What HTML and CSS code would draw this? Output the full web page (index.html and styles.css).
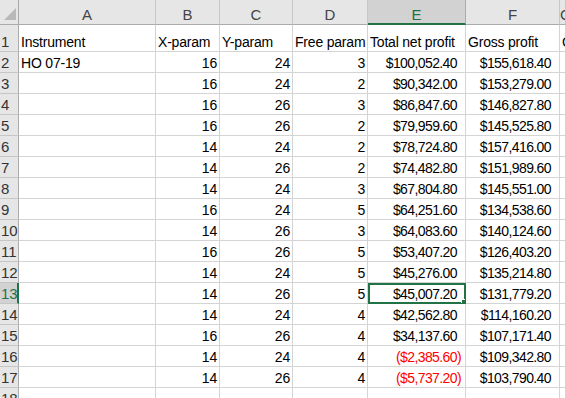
FILE: index.html
```html
<!DOCTYPE html>
<html lang="en">
<head>
  <meta charset="UTF-8" />
  <meta name="viewport" content="width=device-width, initial-scale=1.0" />
  <title>Optimization results</title>
  <link rel="stylesheet" href="styles.css">
</head>
<body>
  <div class="sheet">
    <div class="corner"><span class="corner-mark"></span></div>
    <div class="col-head">A</div>
    <div class="col-head">B</div>
    <div class="col-head">C</div>
    <div class="col-head">D</div>
    <div class="col-head active">E</div>
    <div class="col-head">F</div>
    <div class="col-head">G</div>

    <div class="row-head">1</div>
    <div class="cell">Instrument</div>
    <div class="cell">X-param</div>
    <div class="cell">Y-param</div>
    <div class="cell">Free param</div>
    <div class="cell">Total net profit</div>
    <div class="cell">Gross profit</div>
    <div class="cell">G</div>

    <div class="row-head">2</div>
    <div class="cell">HO 07-19</div>
    <div class="cell num">16</div>
    <div class="cell num">24</div>
    <div class="cell num">3</div>
    <div class="cell money">$100,052.40</div>
    <div class="cell money">$155,618.40</div>
    <div class="cell"></div>

    <div class="row-head">3</div>
    <div class="cell"></div>
    <div class="cell num">16</div>
    <div class="cell num">24</div>
    <div class="cell num">2</div>
    <div class="cell money">$90,342.00</div>
    <div class="cell money">$153,279.00</div>
    <div class="cell"></div>

    <div class="row-head">4</div>
    <div class="cell"></div>
    <div class="cell num">16</div>
    <div class="cell num">26</div>
    <div class="cell num">3</div>
    <div class="cell money">$86,847.60</div>
    <div class="cell money">$146,827.80</div>
    <div class="cell"></div>

    <div class="row-head">5</div>
    <div class="cell"></div>
    <div class="cell num">16</div>
    <div class="cell num">26</div>
    <div class="cell num">2</div>
    <div class="cell money">$79,959.60</div>
    <div class="cell money">$145,525.80</div>
    <div class="cell"></div>

    <div class="row-head">6</div>
    <div class="cell"></div>
    <div class="cell num">14</div>
    <div class="cell num">24</div>
    <div class="cell num">2</div>
    <div class="cell money">$78,724.80</div>
    <div class="cell money">$157,416.00</div>
    <div class="cell"></div>

    <div class="row-head">7</div>
    <div class="cell"></div>
    <div class="cell num">14</div>
    <div class="cell num">26</div>
    <div class="cell num">2</div>
    <div class="cell money">$74,482.80</div>
    <div class="cell money">$151,989.60</div>
    <div class="cell"></div>

    <div class="row-head">8</div>
    <div class="cell"></div>
    <div class="cell num">14</div>
    <div class="cell num">24</div>
    <div class="cell num">3</div>
    <div class="cell money">$67,804.80</div>
    <div class="cell money">$145,551.00</div>
    <div class="cell"></div>

    <div class="row-head">9</div>
    <div class="cell"></div>
    <div class="cell num">16</div>
    <div class="cell num">24</div>
    <div class="cell num">5</div>
    <div class="cell money">$64,251.60</div>
    <div class="cell money">$134,538.60</div>
    <div class="cell"></div>

    <div class="row-head">10</div>
    <div class="cell"></div>
    <div class="cell num">14</div>
    <div class="cell num">26</div>
    <div class="cell num">3</div>
    <div class="cell money">$64,083.60</div>
    <div class="cell money">$140,124.60</div>
    <div class="cell"></div>

    <div class="row-head">11</div>
    <div class="cell"></div>
    <div class="cell num">16</div>
    <div class="cell num">26</div>
    <div class="cell num">5</div>
    <div class="cell money">$53,407.20</div>
    <div class="cell money">$126,403.20</div>
    <div class="cell"></div>

    <div class="row-head">12</div>
    <div class="cell"></div>
    <div class="cell num">14</div>
    <div class="cell num">24</div>
    <div class="cell num">5</div>
    <div class="cell money">$45,276.00</div>
    <div class="cell money">$135,214.80</div>
    <div class="cell"></div>

    <div class="row-head active">13</div>
    <div class="cell"></div>
    <div class="cell num">14</div>
    <div class="cell num">26</div>
    <div class="cell num">5</div>
    <div class="cell money selected">$45,007.20<span class="fill-handle"></span></div>
    <div class="cell money">$131,779.20</div>
    <div class="cell"></div>

    <div class="row-head">14</div>
    <div class="cell"></div>
    <div class="cell num">14</div>
    <div class="cell num">24</div>
    <div class="cell num">4</div>
    <div class="cell money">$42,562.80</div>
    <div class="cell money">$114,160.20</div>
    <div class="cell"></div>

    <div class="row-head">15</div>
    <div class="cell"></div>
    <div class="cell num">16</div>
    <div class="cell num">26</div>
    <div class="cell num">4</div>
    <div class="cell money">$34,137.60</div>
    <div class="cell money">$107,171.40</div>
    <div class="cell"></div>

    <div class="row-head">16</div>
    <div class="cell"></div>
    <div class="cell num">14</div>
    <div class="cell num">24</div>
    <div class="cell num">4</div>
    <div class="cell money neg">($2,385.60)</div>
    <div class="cell money">$109,342.80</div>
    <div class="cell"></div>

    <div class="row-head">17</div>
    <div class="cell"></div>
    <div class="cell num">14</div>
    <div class="cell num">26</div>
    <div class="cell num">4</div>
    <div class="cell money neg">($5,737.20)</div>
    <div class="cell money">$103,790.40</div>
    <div class="cell"></div>

    <div class="row-head">18</div>
    <div class="cell"></div>
    <div class="cell"></div>
    <div class="cell"></div>
    <div class="cell"></div>
    <div class="cell"></div>
    <div class="cell"></div>
    <div class="cell"></div>
  </div>
</body>
</html>
```

FILE: styles.css
```css
body {
  margin: 0;
  background-color: #ffffff;
  font-family: 'Liberation Sans', Arial, sans-serif;
  font-size: 14px;
  color: #000;
  overflow: hidden;
}

.sheet {
  display: grid;
  grid-template-columns: 19px 137px 64px 73px 75px 98px 94px minmax(0, 1fr);
  grid-template-rows: 25px 27px;
  grid-auto-rows: 21px;
  height: 398px;
  overflow: hidden;
}

.sheet > div {
  box-sizing: border-box;
  white-space: nowrap;
  overflow: hidden;
}

.corner {
  background-color: #e6e6e6;
  border-right: 1px solid #ababab;
  border-bottom: 1px solid #ababab;
  position: relative;
}

.corner-mark {
  position: absolute;
  right: 2px;
  bottom: 4px;
  width: 0;
  height: 0;
  border-left: 12px solid transparent;
  border-bottom: 12px solid #b9b9b9;
}

.col-head {
  background-color: #e6e6e6;
  border-right: 1px solid #c6c6c6;
  border-bottom: 1px solid #ababab;
  color: #444;
  font-size: 15px;
  text-align: center;
  line-height: 25px;
  padding-top: 2px;
}

.col-head.active {
  background-color: #d2d2d2;
  color: #217346;
  border-bottom: 2px solid #217346;
  border-right-color: #ababab;
}

.row-head {
  background-color: #e6e6e6;
  border-right: 1px solid #ababab;
  border-bottom: 1px solid #c6c6c6;
  color: #333;
  font-size: 15px;
  padding-left: 1px;
  display: flex;
  align-items: flex-end;
  padding-bottom: 1px;
}

.row-head.active {
  background-color: #d2d2d2;
  color: #217346;
  border-right: 2px solid #217346;
}

.cell {
  border-right: 1px solid #d4d4d4;
  border-bottom: 1px solid #d4d4d4;
  padding: 0 2px;
  display: flex;
  align-items: flex-end;
  padding-bottom: 1px;
  letter-spacing: -0.2px;
}

.num {
  justify-content: flex-end;
}

.money {
  justify-content: flex-end;
  padding-right: 8px;
  letter-spacing: -0.6px;
}

.money.neg {
  color: #ff0000;
  padding-right: 4px;
}

.selected {
  position: relative;
  outline: 2px solid #217346;
  outline-offset: -2px;
}

.fill-handle {
  position: absolute;
  right: -3px;
  bottom: -3px;
  width: 5px;
  height: 5px;
  background-color: #217346;
  border: 1px solid #ffffff;
}
```
